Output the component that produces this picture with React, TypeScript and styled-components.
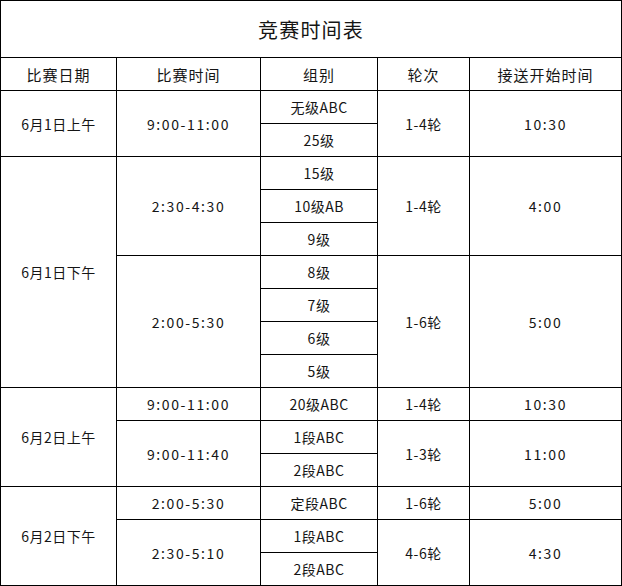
import React from 'react';
import styled, { createGlobalStyle } from 'styled-components';

type Cell = { text: string; rows?: number; time?: boolean };
type Row = Cell[];

// Each row lists only the cells that start on it; rowSpan covers the rest.
const rows: Row[] = [
  [{ text: '6月1日上午', rows: 2 }, { text: '9:00-11:00', rows: 2, time: true }, { text: '无级ABC' }, { text: '1-4轮', rows: 2 }, { text: '10:30', rows: 2, time: true }],
  [{ text: '25级' }],
  [{ text: '6月1日下午', rows: 7 }, { text: '2:30-4:30', rows: 3, time: true }, { text: '15级' }, { text: '1-4轮', rows: 3 }, { text: '4:00', rows: 3, time: true }],
  [{ text: '10级AB' }],
  [{ text: '9级' }],
  [{ text: '2:00-5:30', rows: 4, time: true }, { text: '8级' }, { text: '1-6轮', rows: 4 }, { text: '5:00', rows: 4, time: true }],
  [{ text: '7级' }],
  [{ text: '6级' }],
  [{ text: '5级' }],
  [{ text: '6月2日上午', rows: 3 }, { text: '9:00-11:00', time: true }, { text: '20级ABC' }, { text: '1-4轮' }, { text: '10:30', time: true }],
  [{ text: '9:00-11:40', rows: 2, time: true }, { text: '1段ABC' }, { text: '1-3轮', rows: 2 }, { text: '11:00', rows: 2, time: true }],
  [{ text: '2段ABC' }],
  [{ text: '6月2日下午', rows: 3 }, { text: '2:00-5:30', time: true }, { text: '定段ABC' }, { text: '1-6轮' }, { text: '5:00', time: true }],
  [{ text: '2:30-5:10', rows: 2, time: true }, { text: '1段ABC' }, { text: '4-6轮', rows: 2 }, { text: '4:30', rows: 2, time: true }],
  [{ text: '2段ABC' }],
];

const headers = ['比赛日期', '比赛时间', '组别', '轮次', '接送开始时间'];
const widths = [116, 144, 117, 92, 152];

export default function App() {
  return (
    <>
      <GlobalStyle />
      <Schedule>
        <colgroup>
          {widths.map((w, i) => (
            <Col key={i} $width={w} />
          ))}
        </colgroup>
        <tbody>
          <tr>
            <Title colSpan={5}>竞赛时间表</Title>
          </tr>
          <Line>
            {headers.map(h => (
              <Head key={h}>{h}</Head>
            ))}
          </Line>
          {rows.map((row, i) => (
            <Line key={i}>
              {row.map((cell, j) => (
                <Data key={j} rowSpan={cell.rows} $time={cell.time}>
                  {cell.text}
                </Data>
              ))}
            </Line>
          ))}
        </tbody>
      </Schedule>
    </>
  );
}

const GlobalStyle = createGlobalStyle`
  html, body {
    margin: 0;
    background: #fff;
  }
  body {
    font-family: "Noto Sans CJK SC", "Noto Sans", sans-serif;
    color: #151515;
  }
`;

const Schedule = styled.table`
  width: 621px;
  table-layout: fixed;
  border-collapse: collapse;
  border: 1px solid #000;
`;

const Col = styled.col<{ $width: number }>`
  width: ${p => p.$width}px;
`;

const Title = styled.td`
  height: 56px;
  padding: 0;
  border: 1px solid #000;
  text-align: center;
  font-size: 20px;
  letter-spacing: 1.2px;
`;

const Line = styled.tr`
  height: 33px;
`;

const Head = styled.td`
  padding: 0;
  border: 1px solid #000;
  text-align: center;
  font-size: 15px;
  letter-spacing: 1px;
`;

const Data = styled.td<{ $time?: boolean }>`
  padding: 0;
  border: 1px solid #000;
  text-align: center;
  vertical-align: middle;
  font-size: 14px;
  letter-spacing: ${p => (p.$time ? '1.6px' : '0.5px')};
`;
